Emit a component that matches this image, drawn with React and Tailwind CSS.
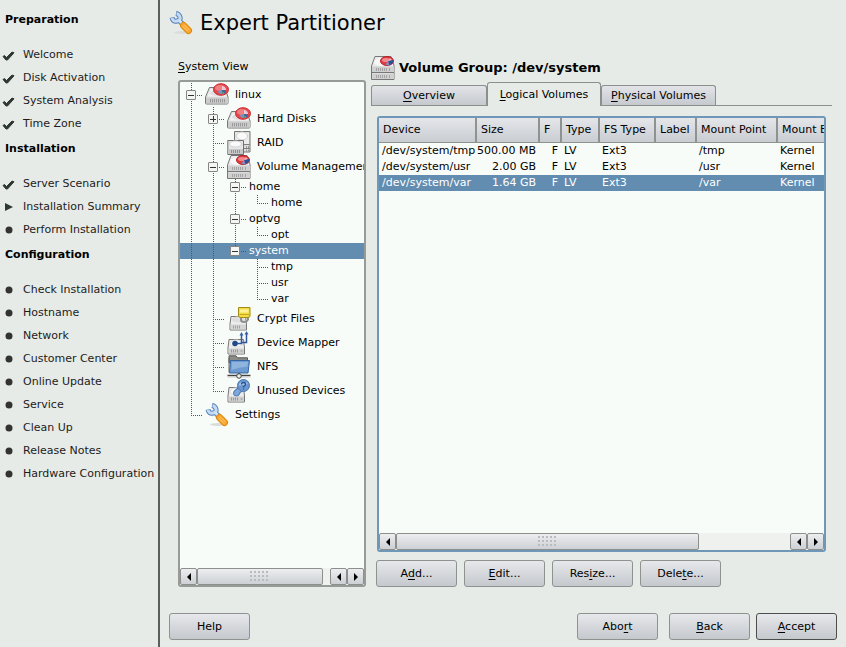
import React from "react";

const steps = [
  {
    title: "Preparation",
    items: [
      ["Welcome", "done"],
      ["Disk Activation", "done"],
      ["System Analysis", "done"],
      ["Time Zone", "done"],
    ],
  },
  {
    title: "Installation",
    items: [
      ["Server Scenario", "done"],
      ["Installation Summary", "current"],
      ["Perform Installation", "todo"],
    ],
  },
  {
    title: "Configuration",
    items: [
      ["Check Installation", "todo"],
      ["Hostname", "todo"],
      ["Network", "todo"],
      ["Customer Center", "todo"],
      ["Online Update", "todo"],
      ["Service", "todo"],
      ["Clean Up", "todo"],
      ["Release Notes", "todo"],
      ["Hardware Configuration", "todo"],
    ],
  },
];

/* Guide codes: "|" line, "t" branch, "l" last branch, " " blank,
   "-" open box, "+" closed box, "_" open box that ends its line */
const tree = [
  { label: "linux", guides: "-", icon: "disk" },
  { label: "Hard Disks", guides: "|+", icon: "disk" },
  { label: "RAID", guides: "|t", icon: "raid" },
  { label: "Volume Management", guides: "|-", icon: "volume" },
  { label: "home", guides: "||-" },
  { label: "home", guides: "|||l" },
  { label: "optvg", guides: "||-" },
  { label: "opt", guides: "|||l" },
  { label: "system", guides: "||_", selected: true },
  { label: "tmp", guides: "|| t" },
  { label: "usr", guides: "|| t" },
  { label: "var", guides: "|| l" },
  { label: "Crypt Files", guides: "|t", icon: "crypt" },
  { label: "Device Mapper", guides: "|t", icon: "mapper" },
  { label: "NFS", guides: "|t", icon: "nfs" },
  { label: "Unused Devices", guides: "|l", icon: "unused" },
  { label: "Settings", guides: "l", icon: "wrench" },
];

const volumes = [
  ["/dev/system/tmp", "500.00 MB", "F", "LV", "Ext3", "", "/tmp", "Kernel"],
  ["/dev/system/usr", "2.00 GB", "F", "LV", "Ext3", "", "/usr", "Kernel"],
  ["/dev/system/var", "1.64 GB", "F", "LV", "Ext3", "", "/var", "Kernel"],
];

const columns = ["Device", "Size", "F", "Type", "FS Type", "Label", "Mount Point", "Mount By"];

function DriveBody() {
  return (
    <>
      <path d="M4.500 4.500h15.500l3 9.500v6q0 1-1 1H1.500q-1 0-1-1V14z" fill="#e2e2e2" stroke="#777" />
      <path d="M5.500 6h13.500l2.500 7.500h-19z" fill="#f2f2f2" />
      <ellipse cx="12" cy="10" rx="7" ry="3" fill="#e0e0e0" />
      <path d="M1 14.500h22v6H1z" fill="#cbcbcb" />
      <path d="M5.500 16v3.500M7.500 16v3.500M9.500 16v3.500M11.500 16v3.500M13.500 16v3.500M15.500 16v3.500M17.500 16v3.500M19.500 16v3.500" stroke="#999" />
    </>
  );
}

function PieBadge() {
  return (
    <>
      <ellipse cx="16" cy="6.500" rx="7.500" ry="5.800" fill="#e5484d" stroke="#c9282e" />
      <ellipse cx="15" cy="5" rx="5" ry="3" fill="#f08080" />
      <path d="M17 7V3a5 4 0 0 1 4 4z" fill="#e9c9d8" />
      <path d="M17 7l4 .5a4 3.500 0 0 1-4 3.500z" fill="#3465a4" />
      <path d="M17 7v4a4 3 0 0 1-4-3z" fill="#7b8fc4" />
      <path d="M17.500 8l2 2.500-2 .5z" fill="#73b53a" />
    </>
  );
}

function SmallDrive() {
  return (
    <>
      <path d="M2 8.500h14.500l1 8.500v6H1v-6z" fill="#ededed" stroke="#777" />
      <ellipse cx="9" cy="12.500" rx="6" ry="3.500" fill="#fafafa" stroke="#ddd" />
      <path d="M1.500 17.500h15.500v5H1.500z" fill="#cfcfcf" />
      <path d="M4.500 18.500v3M6.500 18.500v3M8.500 18.500v3M10.500 18.500v3M13.500 20h2" stroke="#999" />
    </>
  );
}

function Icon({ name }) {
  return (
    <svg className="size-6 shrink-0" viewBox="0 0 24 24" fill="none" aria-hidden="true">
      {name === "disk" && (
        <>
          <DriveBody />
          <PieBadge />
        </>
      )}
      {name === "volume" && (
        <>
          <path d="M4 .5h16l3 9V23.500H.5V10z" fill="#e9e9e9" stroke="#777" />
          <ellipse cx="11" cy="6" rx="8" ry="4" fill="#f7f7f7" />
          <path d="M1 10.500h22v5.500H1zM1 17.500h22v5.500H1z" fill="#d0d0d0" />
          <path d="M.5 16.500h22.500" stroke="#777" />
          <path d="M5.500 12v3M7.500 12v3M9.500 12v3M11.500 12v3M13.500 12v3M15.500 12v3M5.500 19v3M7.500 19v3M9.500 19v3M11.500 19v3M13.500 19v3M15.500 19v3M18.500 19v3M18.500 12v3" stroke="#a4a4a4" />
          <ellipse cx="16" cy="5" rx="6.500" ry="4.500" fill="#e23b41" stroke="#b92329" />
          <ellipse cx="15" cy="4" rx="4" ry="2" fill="#f18a8d" />
          <path d="M17 5l5-1a5 4.500 0 0 1-3.500 5z" fill="#24529c" />
          <path d="M17 5l1.500 4.500a5 4 0 0 1-4-1z" fill="#7b8fc4" />
          <path d="M17 5l2-3 2 2z" fill="#f3b9bb" />
        </>
      )}
      {name === "raid" && (
        <>
          <path d="M7.500.5h15.500v20.500H7.500z" fill="#dedede" stroke="#777" />
          <path d="M8.500 1.500h13.500v11.500H8.500z" fill="#ececec" />
          <ellipse cx="15" cy="5" rx="5.500" ry="4" fill="#fafafa" stroke="#cfcfcf" />
          <path d="M17 13.500h6M17 17.500h6" stroke="#808080" />
          <path d="M19.500 15v2M21.500 15v2M19.500 18.500v2M21.500 18.500v2" stroke="#999" />
          <path d="M.8 9.500h15.700V23.500H.8z" fill="#e6e6e6" stroke="#6f6f6f" />
          <ellipse cx="8.500" cy="13" rx="6" ry="3" fill="#fafafa" stroke="#d4d4d4" />
          <path d="M1.300 18h14.700v5H1.300z" fill="#c8c8c8" />
          <path d="M4.500 19v3M6.500 19v3M8.500 19v3M10.500 19v3M12.500 19v3" stroke="#919191" />
        </>
      )}
      {name === "crypt" && (
        <>
          <path d="M4 9.500h14.500l1 7.500v6H3v-6z" fill="#ededed" stroke="#777" />
          <ellipse cx="11" cy="12.500" rx="6.500" ry="3" fill="#dedede" />
          <path d="M3.500 17.500h15.500v5H3.500z" fill="#d4d4d4" />
          <path d="M6.500 18.500v3M8.500 18.500v3M10.500 18.500v3M12.500 18.500v3" stroke="#a4a4a4" />
          <path d="M14 10v2.500q0 2.500 3 2.500t4-2.500v-3" stroke="#8e8e8e" strokeWidth="2" />
          <path d="M11.500.5h11.500v9l-2 1h-7.500l-2-1z" fill="#f3dc45" stroke="#a08a12" />
          <path d="M13 2.500h8.500v3H13z" fill="#fdf29a" />
          <path d="M12.500 7.500h10" stroke="#c4a81c" />
        </>
      )}
      {name === "mapper" && (
        <>
          <SmallDrive />
          <path d="M8 12.500h6.500V3M14.500 11.500h5V2" stroke="#2f559c" strokeWidth="1.500" />
          <path d="M12.500 4.500l2-3.500 2 3.500zM17.500 3.500l2-3.500 2 3.500z" fill="#3b62a8" />
          <circle cx="8" cy="12.500" r="2.800" fill="#204a87" />
        </>
      )}
      {name === "nfs" && (
        <>
          <path d="M2 .8h7l1.500 2h10v5H2z" fill="#8b8b87" stroke="#5b5b58" />
          <path d="M2 3v14.500h3" stroke="#666" />
          <path d="M3.500 5.500h19l-1.500 12.500H2.500z" fill="#6d9bd1" stroke="#3465a4" />
          <path d="M5 7h16l-.5 4.500Q12 12 4.500 15z" fill="#8fb4de" />
          <path d="M.5 20.500h23M12 18v2" stroke="#444" strokeWidth="1.500" />
          <path d="M.5 22h23" stroke="#ccc" />
          <circle cx="12" cy="21" r="2.300" fill="#eee" stroke="#444" />
        </>
      )}
      {name === "unused" && (
        <>
          <SmallDrive />
          <path d="M14 9.500L9.500 13.500" stroke="#4a77b4" strokeWidth="6" />
          <circle cx="9.500" cy="14" r="3" fill="#7fa7d9" stroke="#4a77b4" />
          <path d="M14 9.500L9.500 13.500" stroke="#7fa7d9" strokeWidth="4" />
          <circle cx="16.500" cy="6.500" r="6" fill="#6b97d0" stroke="#4a77b4" />
          <path d="M12 5a5 4 0 0 1 9 0q-4 1-9 1.500z" fill="#a5c3e8" />
          <path d="M14.500 5.500q0-2 2-2t2 1.700q0 1.300-2 2.300v1M16.500 9.500v1" stroke="#23508f" strokeWidth="1.300" />
        </>
      )}
      {name === "wrench" && (
        <>
          <ellipse cx="13" cy="21.500" rx="8" ry="1.500" fill="#d9dcd8" />
          <path d="M3 6.500q1 4.500 5 3.500t3-4T7 2.500M10 9.500l5 5" stroke="#5580b8" strokeWidth="5" />
          <path d="M3 7q1 4 5 3t3-4T7.500 2.800M10 9.500l5 5" stroke="#c5dbf3" strokeWidth="3" />
          <path d="M10.500 9l4 4.500" stroke="#f0f6fd" />
          <path d="M14.500 14.500l5 5" stroke="#dd8a12" strokeWidth="7" strokeLinecap="round" />
          <path d="M14.500 14.500l5 5" stroke="#f9a52b" strokeWidth="5" strokeLinecap="round" />
          <path d="M15 13.500l5.500 5.500M13.500 15l5.500 5.500" stroke="#fdd079" />
        </>
      )}
    </svg>
  );
}

function StatusMark({ status }) {
  return (
    <svg className="size-4 shrink-0" viewBox="0 0 16 16" aria-label={status}>
      {status === "done" && <path d="M3 9.500l1.500-1 2 2L12 5l2 .8L7.500 13H6z" fill="#2e3836" stroke="#2e3836" strokeLinejoin="round" />}
      {status === "current" && <path d="M5 4l8 4-8 4z" fill="#2e3836" />}
      {status === "todo" && <circle cx="9" cy="8" r="3.500" fill="#333" />}
    </svg>
  );
}

function Guide({ code, tall }) {
  const h = tall ? 24 : 16;
  const mid = h / 2;
  const boxed = "-+_".includes(code);
  const end = code === "l" || code === "_" ? mid : h;
  return (
    <span className="grid w-[22px] shrink-0">
      <svg className="col-start-1 row-start-1" width="22" height={h} shapeRendering="crispEdges" aria-hidden="true">
        {code !== " " && <path d={`M11.500 0V${end}`} stroke="#555" strokeDasharray="1 1" />}
        {code !== " " && code !== "|" && <path d={`M11 ${mid + 0.5}H22`} stroke="#555" strokeDasharray="1 1" />}
      </svg>
      {boxed && (
        <button
          type="button"
          aria-label={code === "+" ? "Expand" : "Collapse"}
          className="col-start-1 row-start-1 ml-[6px] grid size-[10px] place-items-center self-center rounded-[1px] border border-[#858585] bg-[#f4f6f4]"
        >
          <svg width="8" height="8" shapeRendering="crispEdges" aria-hidden="true">
            <path d="M1 4.500h6" stroke="#333" />
            {code === "+" && <path d="M4.500 1v6" stroke="#333" />}
          </svg>
        </button>
      )}
    </span>
  );
}

function ArrowButton({ left }) {
  return (
    <button
      type="button"
      aria-label={left ? "Scroll left" : "Scroll right"}
      className="grid w-[17px] shrink-0 place-items-center rounded-xs border border-[#8c8f8c] bg-linear-to-b from-[#eceef0] to-[#cdd0d4]"
    >
      <svg width="6" height="8" aria-hidden="true">
        <path d={left ? "M5 0v8L1 4z" : "M1 0v8l4-4z"} fill="#000" />
      </svg>
    </button>
  );
}

function ScrollBar({ thumb }) {
  return (
    <div className="flex h-[17px] shrink-0">
      <ArrowButton left />
      <div className="flex min-w-0 flex-1 bg-[#eef1ee]">
        <div className={`${thumb} grid place-items-center rounded-xs border border-[#8c8f8c] bg-linear-to-b from-[#eceef0] to-[#cdd0d4]`}>
          <svg width="20" height="11" shapeRendering="crispEdges" aria-hidden="true">
            {[1, 5, 9].map((y) => (
              <path key={y} d={`M0 ${y}H20`} stroke="#b9bcbe" strokeWidth="2" strokeDasharray="2 2" />
            ))}
          </svg>
        </div>
      </div>
      <ArrowButton left />
      <ArrowButton />
    </div>
  );
}

function Mnemonic({ text }) {
  const [before, key, after] = text.split("_");
  return (
    <span>
      {before}
      <u className="underline-offset-2">{key}</u>
      {after}
    </span>
  );
}

function PushButton({ text, primary }) {
  return (
    <button
      type="button"
      className={`h-[27px] w-[81px] rounded-[3px] border bg-linear-to-b from-[#e6e8eb] to-[#c5c8cd] ${primary ? "border-[#4c4e4c]" : "border-[#8f938f]"}`}
    >
      <Mnemonic text={text} />
    </button>
  );
}

export default function App() {
  return (
    <div className="flex min-h-screen bg-[#e7ebe7] font-['DejaVu_Sans','Verdana',sans-serif] text-[11px] leading-4 text-black">
      <aside className="w-[160px] shrink-0 border-r-2 border-[#5c5e5c] pt-[6px] text-[#1c1c1c]">
        {steps.map((group) => (
          <section key={group.title}>
            <h2 className="h-[37px] pt-[6px] pl-[5px] font-bold text-black">{group.title}</h2>
            <ul>
              {group.items.map(([label, status]) => (
                <li key={label} className="flex h-[23px] items-center gap-[7px] whitespace-nowrap">
                  <StatusMark status={status} />
                  {label}
                </li>
              ))}
            </ul>
          </section>
        ))}
      </aside>

      <main className="flex min-w-0 flex-1 flex-col pt-[11px] pr-[9px] pb-[7px] pl-[9px]">
        <header className="flex h-6 items-center gap-[7px]">
          <Icon name="wrench" />
          <h1 className="text-[21px] leading-6">Expert Partitioner</h1>
        </header>

        <div className="flex min-h-0 flex-1 gap-[5px] pt-[21px] pr-[5px] pl-[9px]">
          <section className="flex w-[188px] shrink-0 flex-col">
            <h2 id="tree-label" className="mt-[3px] mb-[5px]">
              <Mnemonic text="_S_ystem View" />
            </h2>
            <div className="flex flex-1 flex-col rounded-[3px] border-2 border-[#979b97] bg-[#f8fcf8]">
              <ul aria-labelledby="tree-label" className="flex-1 overflow-hidden pt-px">
                {tree.map((node, i) => (
                  <li
                    key={i}
                    className={`flex items-center whitespace-nowrap ${node.icon ? "h-6" : "h-4"} ${node.selected ? "bg-[#628cb0] text-white" : ""}`}
                  >
                    {node.guides.split("").map((code, j) => (
                      <Guide key={j} code={code} tall={Boolean(node.icon)} />
                    ))}
                    <span className="flex items-center gap-[6px] pl-[3px]">
                      {node.icon && <Icon name={node.icon} />}
                      {node.label}
                    </span>
                  </li>
                ))}
              </ul>
              <ScrollBar thumb="w-[95%]" />
            </div>
          </section>

          <section className="flex min-w-0 flex-1 flex-col">
            <div className="flex h-6 items-center gap-1">
              <Icon name="volume" />
              <h2 className="text-[13px] font-bold">Volume Group: /dev/system</h2>
            </div>

            <div role="tablist" className="mt-[2px] flex h-6 items-end border-b border-[#8c908c]">
              <button type="button" role="tab" className="h-[20px] w-[116px] rounded-t-[3px] border border-b-0 border-[#8c908c] bg-linear-to-b from-[#e2e4e8] to-[#c6c9ce]">
                <Mnemonic text="_O_verview" />
              </button>
              <button type="button" role="tab" aria-selected="true" className="-mb-px h-6 w-[114px] rounded-t-[3px] border border-b-0 border-[#8c908c] bg-[#e7ebe7]">
                <Mnemonic text="_L_ogical Volumes" />
              </button>
              <button type="button" role="tab" className="h-[20px] w-[115px] rounded-t-[3px] border border-b-0 border-[#8c908c] bg-linear-to-b from-[#e2e4e8] to-[#c6c9ce]">
                <Mnemonic text="_P_hysical Volumes" />
              </button>
            </div>

            <div className="mx-[6px] mt-[10px] flex flex-1 flex-col rounded-[3px] border-2 border-[#6f97b8] bg-[#f8fcf8]">
              <div className="flex-1 overflow-hidden">
                <table className="w-full min-w-[444px] table-fixed border-collapse whitespace-nowrap">
                  <colgroup>
                    <col className="w-[97px]" />
                    <col className="w-[63px]" />
                    <col className="w-[22px]" />
                    <col className="w-[38px]" />
                    <col className="w-[56px]" />
                    <col className="w-[41px]" />
                    <col className="w-[81px]" />
                    <col />
                  </colgroup>
                  <thead>
                    <tr className="h-6">
                      {columns.map((name) => (
                        <th
                          key={name}
                          scope="col"
                          className="overflow-hidden border-r-2 border-b border-[#8f938f] bg-linear-to-b from-[#e4e6ea] to-[#c9ccd1] pl-1 text-left font-normal last:border-r-0"
                        >
                          {name}
                        </th>
                      ))}
                    </tr>
                  </thead>
                  <tbody>
                    {volumes.map((row, i) => (
                      <tr key={row[0]} className={`h-4 ${i === 2 ? "bg-[#628cb0] text-white" : ""}`}>
                        {row.map((cell, j) => (
                          <td key={j} className={`p-0 ${j === 1 || j === 2 ? "pr-[3px] text-right" : "pl-[3px]"}`}>
                            {cell}
                          </td>
                        ))}
                      </tr>
                    ))}
                  </tbody>
                </table>
              </div>
              <ScrollBar thumb="w-[77%]" />
            </div>

            <div className="mt-2 flex gap-[7px] pl-[5px]">
              <PushButton text="A_d_d..." />
              <PushButton text="_E_dit..." />
              <PushButton text="Res_i_ze..." />
              <PushButton text="Dele_t_e..." />
            </div>
          </section>
        </div>

        <footer className="mt-[26px] flex">
          <PushButton text="Help__" />
          <div className="ml-auto flex gap-[11px]">
            <PushButton text="Abo_r_t" />
            <PushButton text="_B_ack" />
          </div>
          <div className="ml-[6px]">
            <PushButton text="_A_ccept" primary />
          </div>
        </footer>
      </main>
    </div>
  );
}
